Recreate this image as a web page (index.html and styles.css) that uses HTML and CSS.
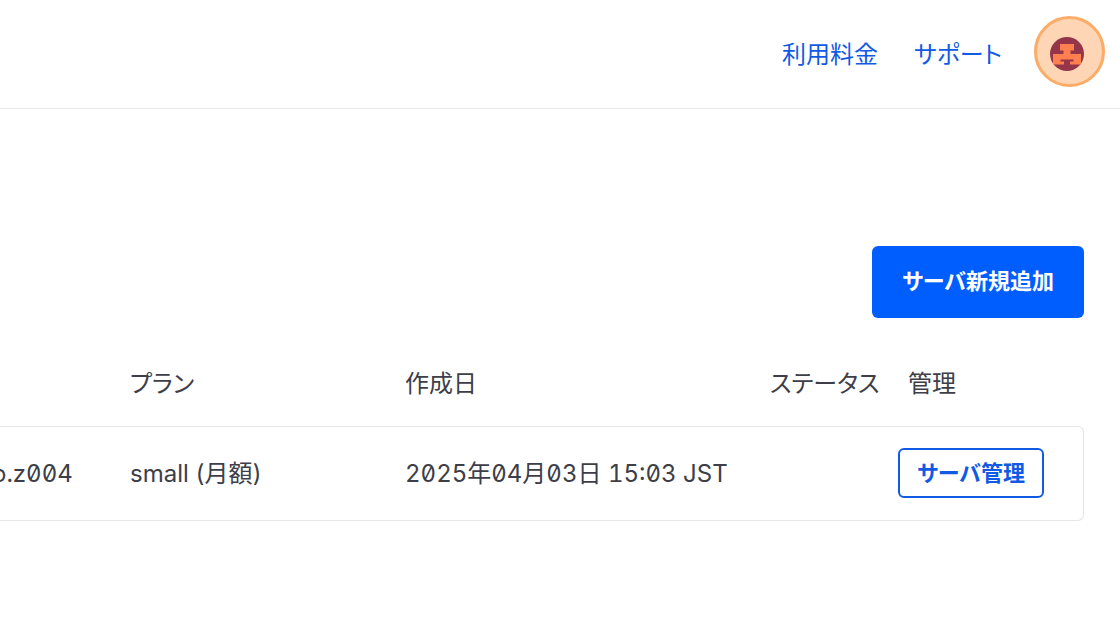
FILE: index.html
```html
<!DOCTYPE html>
<html lang="ja">
<head>
    <meta charset="UTF-8">
    <meta name="viewport" content="width=device-width, initial-scale=1.0">
    <title>サーバ一覧</title>
    <link rel="stylesheet" href="styles.css">
</head>
<body>
    <header class="header">
        <nav class="nav">
            <a href="#">利用料金</a>
            <a href="#">サポート</a>
        </nav>
        <button class="account" type="button" aria-label="アカウント">
            <svg viewBox="0 0 71 71" aria-hidden="true">
                <circle cx="35.5" cy="35.5" r="34" fill="#fed5b5" stroke="#fbac66" stroke-width="3"/>
                <circle cx="33" cy="38" r="17" fill="#95354a"/>
                <path d="M26 28h14v6.500h-3.500v3.500h10.500v10.500h-11v-3h3.500v-2h-13v2h3.500v3h-11v-10.500h10.500v-3.500h-3.500z" fill="#fe7f4f"/>
            </svg>
        </button>
    </header>

    <main class="main">
        <div class="actions">
            <button class="btn btn-primary" type="button">サーバ新規追加</button>
        </div>

        <table class="servers">
            <thead>
                <tr>
                    <th class="name"></th>
                    <th class="plan">プラン</th>
                    <th class="date">作成日</th>
                    <th class="status">ステータス</th>
                    <th class="manage">管理</th>
                </tr>
            </thead>
            <tbody>
                <tr>
                    <td>o.z004</td>
                    <td>small (月額)</td>
                    <td>2025年04月03日 15:03 JST</td>
                    <td></td>
                    <td><button class="btn btn-outline" type="button">サーバ管理</button></td>
                </tr>
            </tbody>
        </table>
    </main>
</body>
</html>
```

FILE: styles.css
```css
* {
    box-sizing: border-box;
}
body {
    margin: 0;
    overflow-x: hidden;
    background: #fff;
    color: #3d3e48;
    font-family: Inter, "Noto Sans CJK JP", sans-serif;
    font-size: 24px;
    line-height: 36px;
    font-feature-settings: "palt", "zero", "tnum";
}
.header {
    display: flex;
    justify-content: flex-end;
    align-items: center;
    gap: 32px;
    height: 109px;
    padding: 0 15px 5px;
    border-bottom: 1px solid #e8e8ea;
}
.nav {
    display: flex;
    gap: 36px;
    padding-top: 6px;
}
.nav a {
    color: #115ae4;
    text-decoration: none;
}
.account {
    width: 71px;
    height: 71px;
    padding: 0;
    border: 0;
    background: none;
    cursor: pointer;
}
.account svg {
    display: block;
}
.main {
    margin-left: -24px;
    padding: 137px 36px 0 0;
}
.actions {
    display: flex;
    justify-content: flex-end;
}
.btn {
    padding: 0 0 6px;
    border-radius: 6px;
    font-family: inherit;
    font-feature-settings: inherit;
    font-size: 22px;
    font-weight: 700;
    cursor: pointer;
}
.btn-primary {
    width: 212px;
    height: 72px;
    border: 0;
    background: #005eff;
    color: #fff;
}
.btn-outline {
    display: block;
    width: 146px;
    height: 50px;
    padding-bottom: 4px;
    border: 2px solid #115ae4;
    background: #fff;
    color: #115ae4;
}
.servers {
    width: 100%;
    margin-top: 24px;
    border-spacing: 0;
    table-layout: fixed;
}
.servers th {
    height: 84px;
    padding: 0;
    font-weight: 400;
    text-align: left;
}
.servers td {
    height: 95px;
    padding: 0;
    border: solid #e5e5ea;
    border-width: 1px 0;
    white-space: nowrap;
}
.servers td:first-child {
    padding-left: 16px;
}
.servers td:last-child {
    padding-bottom: 2px;
    border-right-width: 1px;
    border-radius: 0 6px 6px 0;
}
.servers .name {
    width: 154px;
}
.servers .plan {
    width: 275px;
}
.servers .date {
    width: 365px;
}
.servers .manage {
    width: 186px;
    padding-left: 10px;
}
```
